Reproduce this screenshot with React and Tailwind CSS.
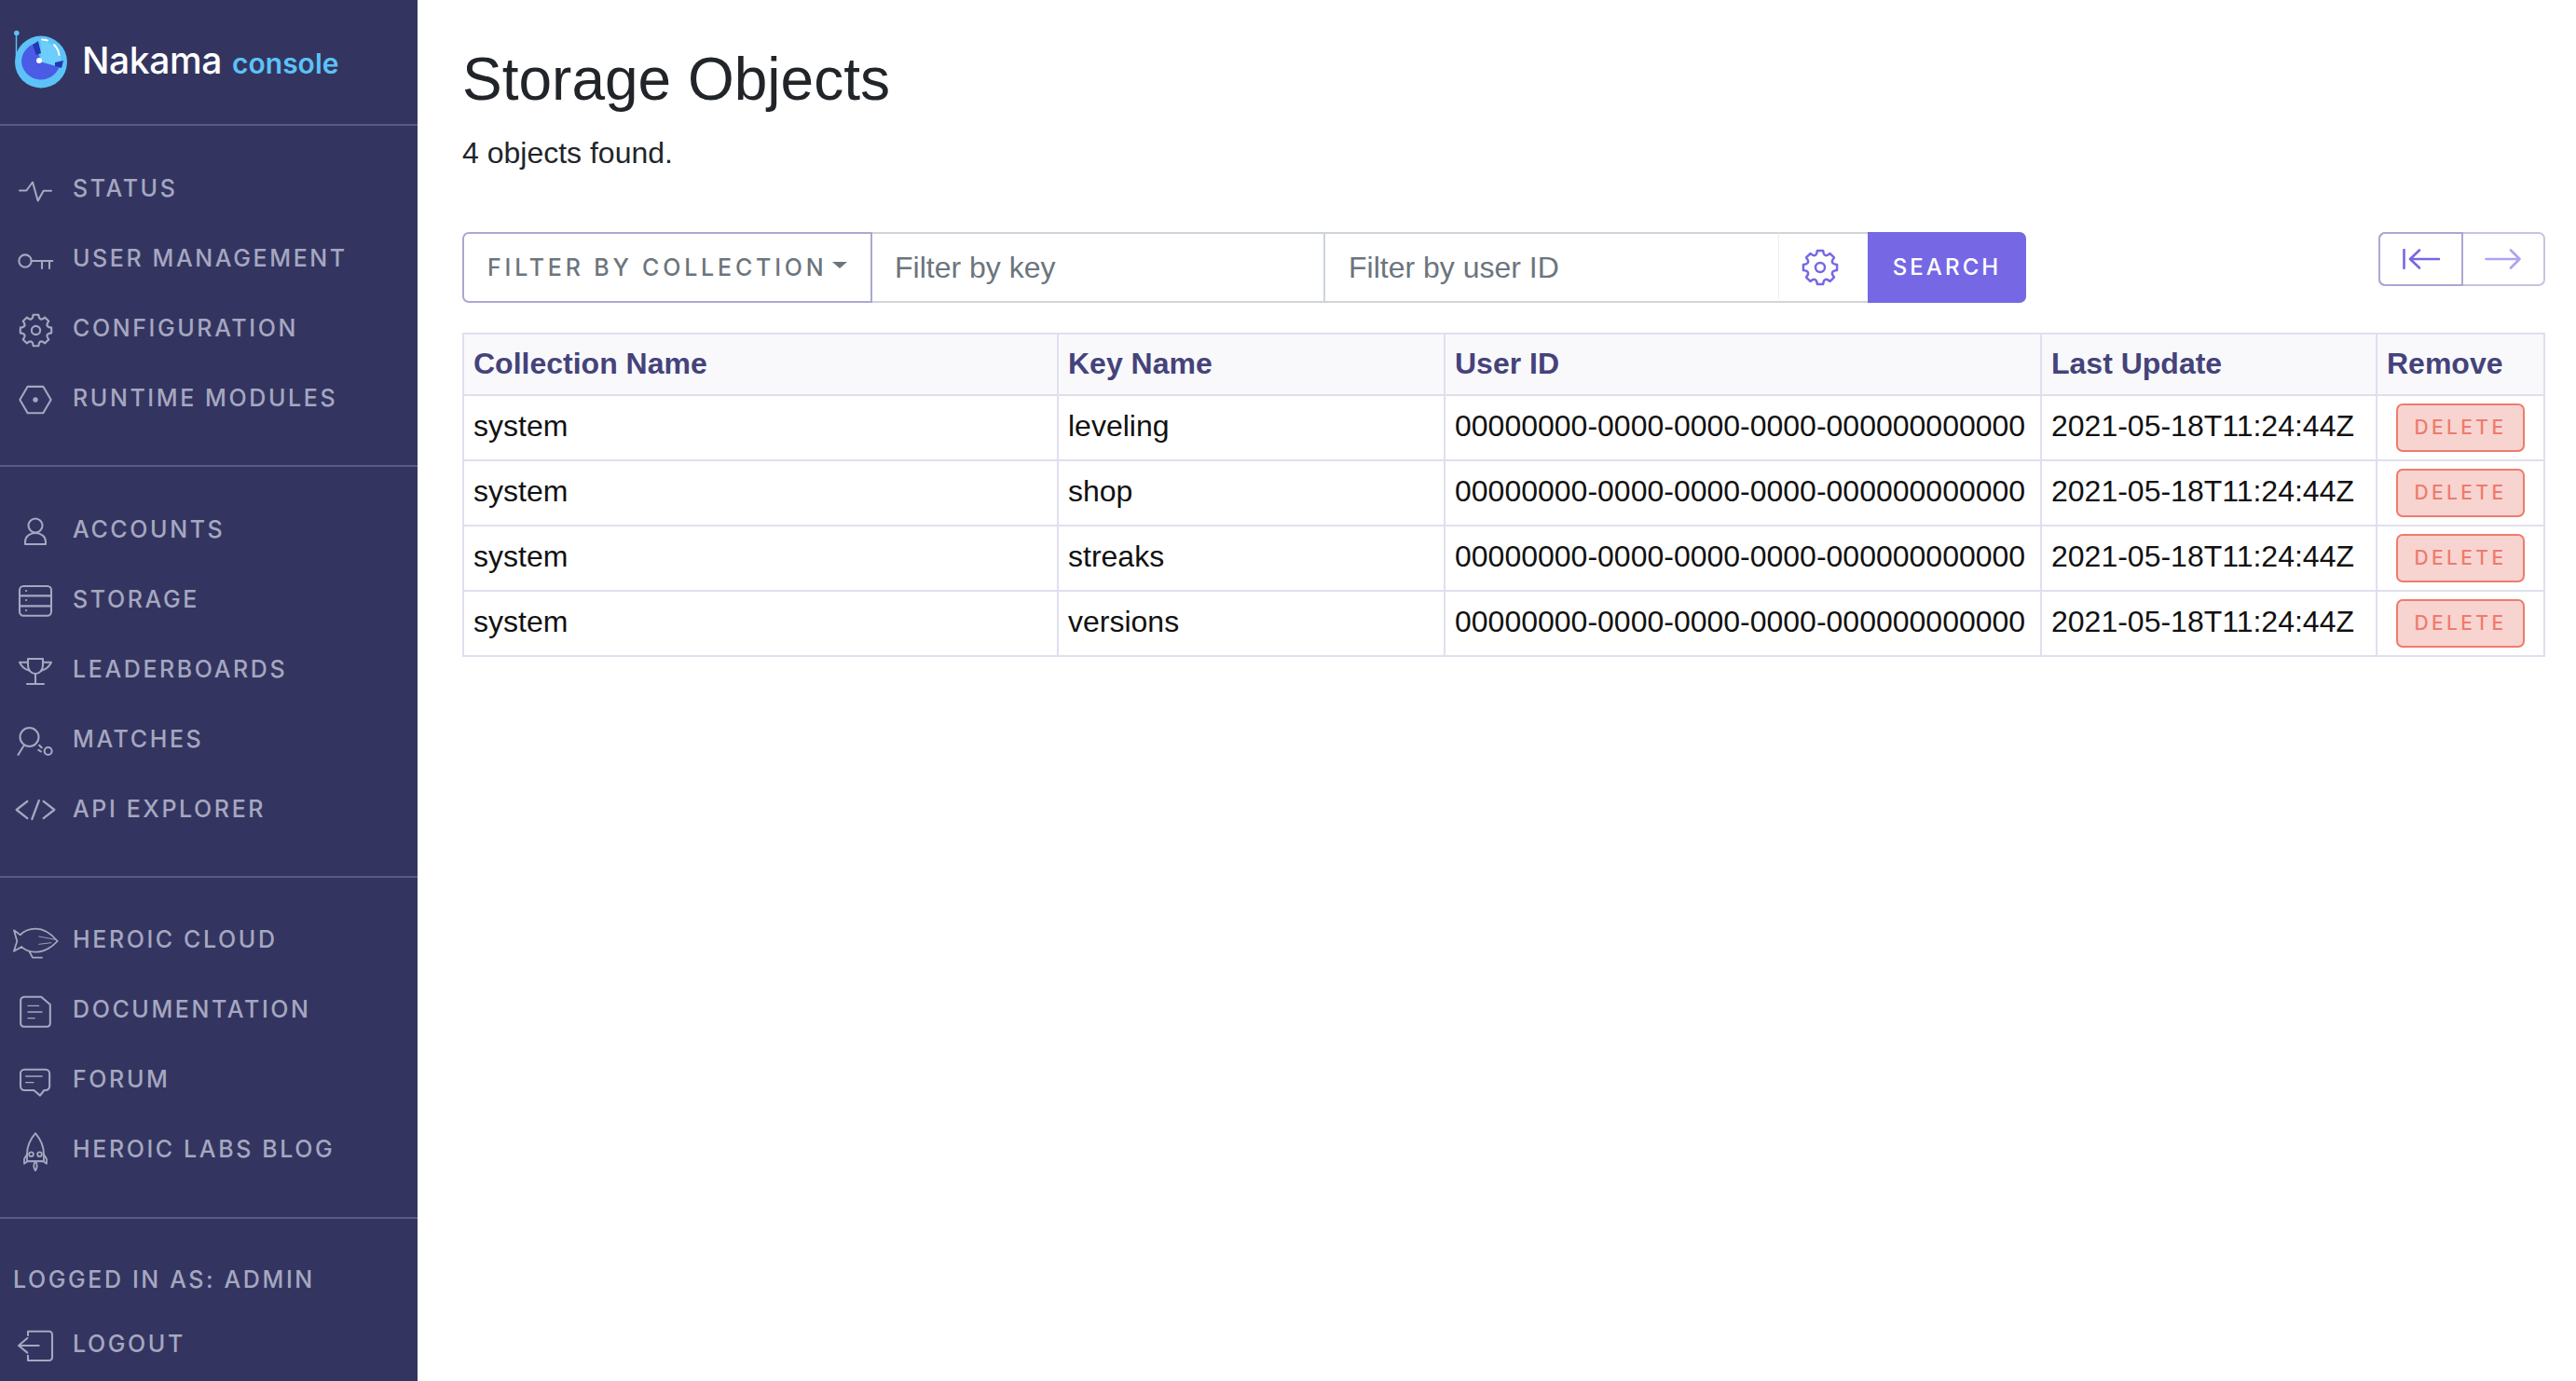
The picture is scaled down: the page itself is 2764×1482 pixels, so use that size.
// App.jsx
import React from 'react';

// Roda dentada de 8 dentes, usada nos ícones de configuração
const gearPath = (() => {
    const teeth = 8;
    const step = (Math.PI * 2) / teeth;
    const at = (a, r) => `${(12 + Math.cos(a) * r).toFixed(2)} ${(12 + Math.sin(a) * r).toFixed(2)}`;
    let d = '';
    for (let i = 0; i < teeth; i++) {
        const a = i * step - Math.PI / 2;
        d += `${i === 0 ? 'M' : 'L'}${at(a - 0.17, 11)}L${at(a + 0.17, 11)}Q${at(a + step / 2, 6.2)} ${at(a + step - 0.17, 11)}`;
    }
    return d + 'Z';
})();

const Icon = ({ children, className = 'w-[40px] h-[40px]', viewBox = '0 0 24 24', sw = 1.25 }) => (
    <svg viewBox={viewBox} className={className} fill="none" stroke="currentColor" strokeWidth={sw} strokeLinecap="round" strokeLinejoin="round">
        {children}
    </svg>
);

const StatusIcon = () => (
    <Icon><path d="M1.800 12.900H6.200L10.200 7.500 13.600 19.500 17.200 13H22.200" /></Icon>
);
const KeyIcon = () => (
    <Icon>
        <circle cx="5.400" cy="13.200" r="4" />
        <path d="M9.400 13.200H23M16.200 13.200V18M21 13.200V18" />
    </Icon>
);
const GearIcon = () => (
    <Icon className="w-[37px] h-[37px] mt-[3px]" sw={1.35}>
        <path d={gearPath} />
        <circle cx="12" cy="12" r="3" />
    </Icon>
);
const HexIcon = () => (
    <Icon className="w-[40px] h-[40px] mt-[3px]">
        <path d="M7 3.500h10l5 8.500-5 8.500H7L2 12z" />
        <circle cx="12" cy="12" r="1" fill="currentColor" />
    </Icon>
);
const UserIcon = () => (
    <Icon>
        <circle cx="12" cy="9" r="4.500" />
        <path d="M5.400 21v-1.500C5.400 16 8.500 13.800 12 13.800s6.600 2.200 6.600 5.700V21z" />
    </Icon>
);
const StorageIcon = () => (
    <Icon>
        <rect x="1.800" y="3" width="20.400" height="19" rx="2.500" />
        <path d="M1.800 9.200h20.400M1.800 15.800h20.400" />
        <path d="M6 6h.1M6 12h.1M6 18.600h.1" />
    </Icon>
);
const TrophyIcon = () => (
    <Icon>
        <path d="M7.200 4.800h9.600V9c0 3-2 5.400-4.800 5.400S7.200 12 7.200 9z" />
        <path d="M7.200 7H1.800c1 2.500 3 4.500 6.500 5.500M16.800 7h5.400c-1 2.500-3 4.500-6.500 5.500M12 14.400V21M6.600 21h10.800" />
    </Icon>
);
const MatchIcon = () => (
    <Icon>
        <circle cx="8.100" cy="10.200" r="6" />
        <path d="M4.200 16.200L.9 21.600M14.500 15.500l1.500 1.500M14 18.500l1.500 1" />
        <circle cx="20.200" cy="19.200" r="2.400" />
    </Icon>
);
const CodeIcon = () => (
    <Icon className="w-[44px] h-[40px]" viewBox="0 0 26.400 24" sw={1.35}>
        <path d="M8 6.500L1 12l7 5.500M18.400 6.500l7 5.500-7 5.500M15.500 6L11 18" />
    </Icon>
);
const BlimpIcon = () => (
    <Icon className="w-[50px] h-[34px] mt-[7px]" viewBox="0 0 50 34" sw={1.8}>
        <path d="M8.700 8.300C14 3 19 1.700 25 1.700 34 1.700 42 7 48.700 15 42 22 34 26.700 25 26.700 19 26.700 14 25 10.300 21L2 25.700 5.300 15 2 3.300z" />
        <path d="M28.700 10L47 13.300M28.700 18.300L42 16.700" strokeWidth="0.9" />
        <path d="M18.700 26.500L22 32.700H32" />
    </Icon>
);
const DocIcon = () => (
    <Icon className="w-[40px] h-[40px] mt-[2px]">
        <path d="M4.500 2.800h11.200l5.800 5v12.200a2 2 0 0 1-2 2h-15a2 2 0 0 1-2-2v-15a2 2 0 0 1 2-2z" />
        <path d="M7.200 8.600h7M7.200 12.600h9M7.200 16.600h4.300" strokeWidth="0.8" />
    </Icon>
);
const ForumIcon = () => (
    <Icon className="w-[40px] h-[40px] mt-[2px]">
        <path d="M4.900 4.600h13.700a2.500 2.500 0 0 1 2.500 2.500v8.400a2.500 2.500 0 0 1-2.500 2.500H17.600l-2.600 3.400-4-3.400H4.900a2.500 2.500 0 0 1-2.500-2.500V7.100a2.500 2.500 0 0 1 2.500-2.500z" />
        <path d="M5.800 9h10.500M5.800 13h5" strokeWidth="0.8" />
    </Icon>
);
const RocketIcon = () => (
    <Icon className="w-[40px] h-[44px] mt-[3px]" viewBox="0 0 24 26.400" sw={1.1}>
        <path d="M12 1.900C8.500 6 6.600 11 6.600 15.400v4.500h10.800v-4.500C17.400 11 15.500 6 12 1.900z" />
        <path d="M6.600 15.400L4.800 18.500V21.400L7 20h10l2.200 1.400V18.500l-1.800-3.100" />
        <circle cx="9.300" cy="15.400" r="1.400" />
        <circle cx="14.700" cy="15.400" r="1.400" />
        <path d="M12 20c-1.300 1.800-1.300 4 0 5.900 1.300-1.900 1.300-4.100 0-5.900z" />
    </Icon>
);
const LogoutIcon = () => (
    <Icon className="w-[40px] h-[40px] mt-[1px]">
        <path d="M7.200 6V3.400h13.600a2 2 0 0 1 2 2v14.800a2 2 0 0 1-2 2H7.200V19" />
        <path d="M14.200 12.600H1.200M6.800 7.800L1.200 12.600l5.600 4.600" />
    </Icon>
);

const Logo = () => (
    <svg viewBox="0 0 58 64" className="w-[58px] h-[64px] shrink-0">
        <path d="M2.500 5v24" stroke="#5cc2f7" strokeWidth="1.500" />
        <circle cx="2.800" cy="3.500" r="2.800" fill="#5cc2f7" />
        <circle cx="29" cy="34.500" r="28" fill="#5cc2f7" />
        <path d="M29 12a22.500 22.500 0 0 1 21 28l-21-5.500z" fill="#6dcdfb" />
        <path d="M8 34.500A21 21 0 0 1 23 14.500l6 20 19.500 5.500A21 21 0 0 1 8 34.500z" fill="#4a5be6" />
        <path d="M20 16l6-4 3 13-5 2z" fill="#2338b0" />
        <path d="M44 35l9-2-2 8-7-2z" fill="#2338b0" />
        <circle cx="27" cy="33" r="3" fill="#fff" />
        <path d="M30 10.500c2 0 4 .3 6 1M43 16c3 3 5 7 5.500 11" stroke="#fff" strokeWidth="2" fill="none" strokeLinecap="round" />
    </svg>
);

const navText = "text-[#a6a7c0] text-[25px] font-medium tracking-[0.104em] font-['Inter',sans-serif]";

const NavItem = ({ icon: Ic, label }) => (
    <div className="flex items-center h-[75px]">
        <span className="w-[76px] mr-[2px] flex justify-center text-[#a6a7c0]">
            <Ic />
        </span>
        <span className={navText}>{label}</span>
    </div>
);

const Section = ({ items, className = 'pt-[30px] pb-[34px]' }) => (
    <div className={`${className} border-b-2 border-[#5a5b82]`}>
        {items.map((it) => (
            <NavItem key={it.label} icon={it.icon} label={it.label} />
        ))}
    </div>
);

const rows = ['leveling', 'shop', 'streaks', 'versions'];
const userId = '00000000-0000-0000-0000-000000000000';

const cellClass = 'border-2 border-[#e0dfee] px-[10px] align-middle';
const headClass = `${cellClass} pb-[3px] text-left font-bold text-[#45437a] bg-[#f9f9fc]`;
const textClass = `${cellClass} pb-[5px] whitespace-nowrap`;

const App = () => {
    return (
        <div className="flex min-h-[1482px] bg-white font-['Liberation_Sans',Arial,sans-serif]">
            {/* Barra lateral */}
            <aside className="w-[448px] shrink-0 h-[1482px] bg-[#333560] flex flex-col overflow-hidden">
                <div className="h-[135px] border-b-2 border-[#5a5b82] flex items-center pl-[15px] pb-[6px]">
                    <Logo />
                    <span className="ml-[15px] text-white text-[39px] font-medium font-['Inter',sans-serif] tracking-[-0.01em] mt-[3px]">Nakama</span>
                    <span className="ml-[11px] text-[#5cc2f7] text-[30px] font-semibold font-['Inter',sans-serif] mt-[9px]">console</span>
                </div>
                <Section items={[
                    { icon: StatusIcon, label: 'STATUS' },
                    { icon: KeyIcon, label: 'USER MANAGEMENT' },
                    { icon: GearIcon, label: 'CONFIGURATION' },
                    { icon: HexIcon, label: 'RUNTIME MODULES' },
                ]} />
                <Section items={[
                    { icon: UserIcon, label: 'ACCOUNTS' },
                    { icon: StorageIcon, label: 'STORAGE' },
                    { icon: TrophyIcon, label: 'LEADERBOARDS' },
                    { icon: MatchIcon, label: 'MATCHES' },
                    { icon: CodeIcon, label: 'API EXPLORER' },
                ]} />
                <Section className="pt-[29px] pb-[35px]" items={[
                    { icon: BlimpIcon, label: 'HEROIC CLOUD' },
                    { icon: DocIcon, label: 'DOCUMENTATION' },
                    { icon: ForumIcon, label: 'FORUM' },
                    { icon: RocketIcon, label: 'HEROIC LABS BLOG' },
                ]} />
                <div className={`pl-[14px] mt-[51px] leading-[28px] ${navText}`}>
                    LOGGED IN AS: ADMIN
                </div>
                <div className="mt-[18px]">
                    <NavItem icon={LogoutIcon} label="LOGOUT" />
                </div>
            </aside>

            {/* Conteúdo principal */}
            <main className="flex-1 pl-[48px] pr-[33px]">
                <h1 className="mt-[50px] text-[64px] leading-[70px] text-[#212529]">Storage Objects</h1>
                <p className="mt-[22px] text-[32px] leading-[44px] text-[#212529]">4 objects found.</p>

                <div className="mt-[63px] flex items-start justify-between">
                    <div className="flex h-[76px] text-[32px]">
                        <div className="w-[440px] border-2 border-[#aaa8d2] rounded-l-[7px] flex items-center pl-[25px] pt-[2px] text-[#6c757d] text-[25px] tracking-[0.152em] font-medium font-['Inter',sans-serif]">
                            FILTER BY COLLECTION
                            <span className="ml-[6px] mb-[7px] w-0 h-0 border-x-[8px] border-x-transparent border-t-[7px] border-t-[#6c757d]" />
                        </div>
                        <div className="w-[486px] border-y-2 border-r-2 border-[#ced4da] flex items-center pl-[24px] pb-[1px] text-[#6c757d]">Filter by key</div>
                        <div className="w-[486px] border-y-2 border-[#ced4da] flex items-center pl-[25px] pb-[1px] text-[#6c757d]">Filter by user ID</div>
                        <div className="w-[97px] border-y-2 border-l border-y-[#ced4da] border-l-[#eeeeee] flex items-center justify-center pr-[8px] text-[#7668e4]">
                            <svg viewBox="0 0 24 24" className="w-[40px] h-[40px]" fill="none" stroke="currentColor" strokeWidth="1.500" strokeLinejoin="round">
                                <path d={gearPath} />
                                <circle cx="12" cy="12" r="3" />
                            </svg>
                        </div>
                        <div className="w-[170px] -ml-[1px] bg-[#7668e4] rounded-r-[7px] flex items-center justify-center text-white text-[24px] tracking-[0.13em] font-medium font-['Inter',sans-serif]">SEARCH</div>
                    </div>
                    <div className="flex h-[58px] w-[179px] border-2 border-[#c5c4e2] rounded-[7px]">
                        <div className="w-[91px] -m-[2px] mr-0 border-2 border-[#aaa8d2] rounded-l-[7px] flex items-center justify-center text-[#7668e4]">
                            <svg viewBox="0 0 40 22" className="w-[40px] h-[22px]" fill="none" stroke="currentColor" strokeWidth="2.600" strokeLinecap="round" strokeLinejoin="round">
                                <path d="M1.500 1v20M39 11H8M18 1.500L8 11l10 9.500" />
                            </svg>
                        </div>
                        <div className="flex-1 flex items-center justify-center text-[#aca4ef]">
                            <svg viewBox="0 0 40 22" className="w-[40px] h-[22px]" fill="none" stroke="currentColor" strokeWidth="2.600" strokeLinecap="round" strokeLinejoin="round">
                                <path d="M1.500 11h36M28 1.500l9.500 9.500-9.500 9.500" />
                            </svg>
                        </div>
                    </div>
                </div>

                <table className="mt-[32px] w-[2233px] table-fixed border-collapse text-[32px] text-[#111]">
                    <colgroup>
                        <col className="w-[638px]" />
                        <col className="w-[415px]" />
                        <col className="w-[640px]" />
                        <col className="w-[360px]" />
                        <col className="w-[180px]" />
                    </colgroup>
                    <thead>
                        <tr className="h-[66px]">
                            <th className={headClass}>Collection Name</th>
                            <th className={headClass}>Key Name</th>
                            <th className={headClass}>User ID</th>
                            <th className={headClass}>Last Update</th>
                            <th className={headClass}>Remove</th>
                        </tr>
                    </thead>
                    <tbody>
                        {rows.map((key) => (
                            <tr key={key} className="h-[70px]">
                                <td className={textClass}>system</td>
                                <td className={textClass}>{key}</td>
                                <td className={textClass}>{userId}</td>
                                <td className={textClass}>2021-05-18T11:24:44Z</td>
                                <td className={`${cellClass} pb-[1px]`}>
                                    <div className="ml-[10px] w-[138px] h-[52px] bg-[#f8d4d0] border-2 border-[#ee7b6d] rounded-[7px] flex items-center justify-center text-[#ee7b6d] text-[21px] tracking-[0.16em] font-medium font-['Inter',sans-serif]">DELETE</div>
                                </td>
                            </tr>
                        ))}
                    </tbody>
                </table>
            </main>
        </div>
    );
};

export default App;
